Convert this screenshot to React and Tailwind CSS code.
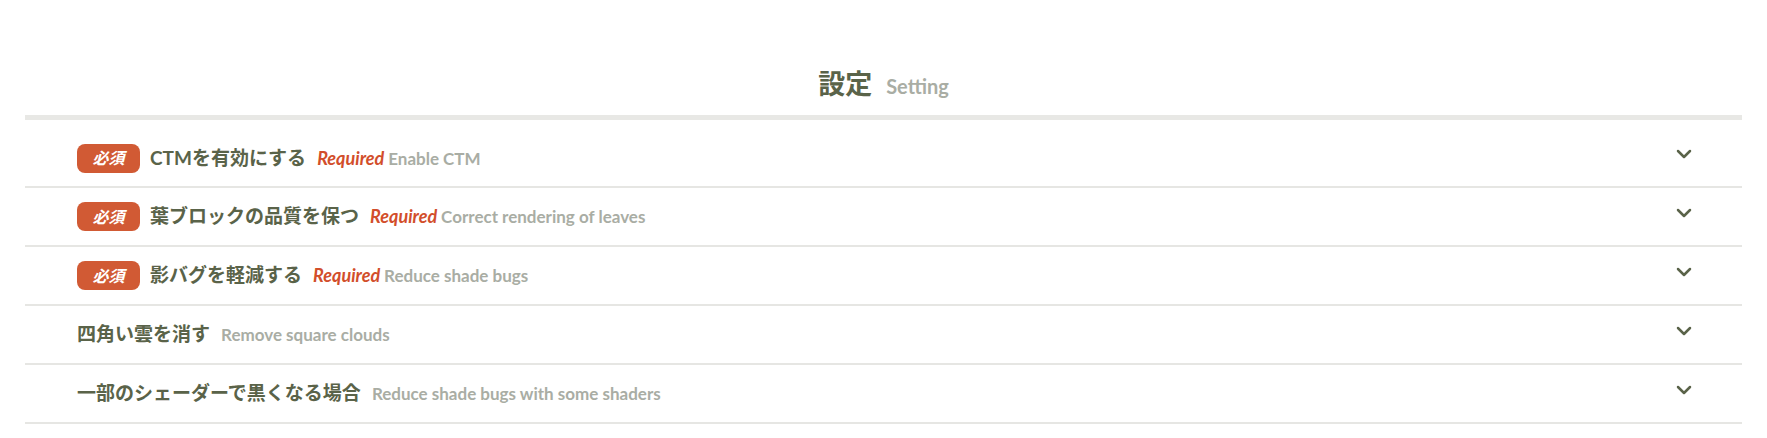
import { ChevronDown } from "lucide-react";

const items = [
  { required: true, title: "CTMを有効にする", en: "Enable CTM" },
  { required: true, title: "葉ブロックの品質を保つ", en: "Correct rendering of leaves" },
  { required: true, title: "影バグを軽減する", en: "Reduce shade bugs" },
  { required: false, title: "四角い雲を消す", en: "Remove square clouds" },
  { required: false, title: "一部のシェーダーで黒くなる場合", en: "Reduce shade bugs with some shaders" },
];

function Row({ item, first }) {
  return (
    <div
      className={
        "flex items-center justify-between border-b-2 border-[#e6e6e3] pl-[52px] pr-[46px] " +
        (first ? "h-[68px] pt-[10px]" : "h-[59px]")
      }
    >
      <div className="flex items-center">
        {item.required && (
          <span className="mr-[10px] flex h-[29px] w-[63px] items-center justify-center rounded-[8px] bg-[#d15a34] text-[16px] font-bold italic text-white">
            必須
          </span>
        )}
        <span className="text-[19px] font-bold text-[#5a6349]">{item.title}</span>
        <span className="ml-[11px] text-[17px] font-bold">
          {item.required && <span className="text-[18px] italic text-[#d24e2b]">Required </span>}
          <span className="text-[#a9ada4]">{item.en}</span>
        </span>
      </div>
      <ChevronDown className="mb-[8px] h-[24px] w-[24px] text-[#5a6349]" strokeWidth={2.5} />
    </div>
  );
}

export default function App() {
  return (
    <main
      className="min-h-[438px] bg-white px-[25px] pt-[63px]"
      style={{ fontFamily: 'Lato, "Noto Sans CJK JP", sans-serif' }}
    >
      <h2 className="flex items-baseline justify-center gap-[14px] border-b-[5px] border-[#e8e8e5] pb-[8px] leading-[42px]">
        <span className="text-[27px] font-bold text-[#5a6349]">設定</span>
        <span className="text-[20px] font-bold text-[#a9ada4]">Setting</span>
      </h2>
      <div>
        {items.map((item, i) => (
          <Row key={i} item={item} first={i === 0} />
        ))}
      </div>
    </main>
  );
}
